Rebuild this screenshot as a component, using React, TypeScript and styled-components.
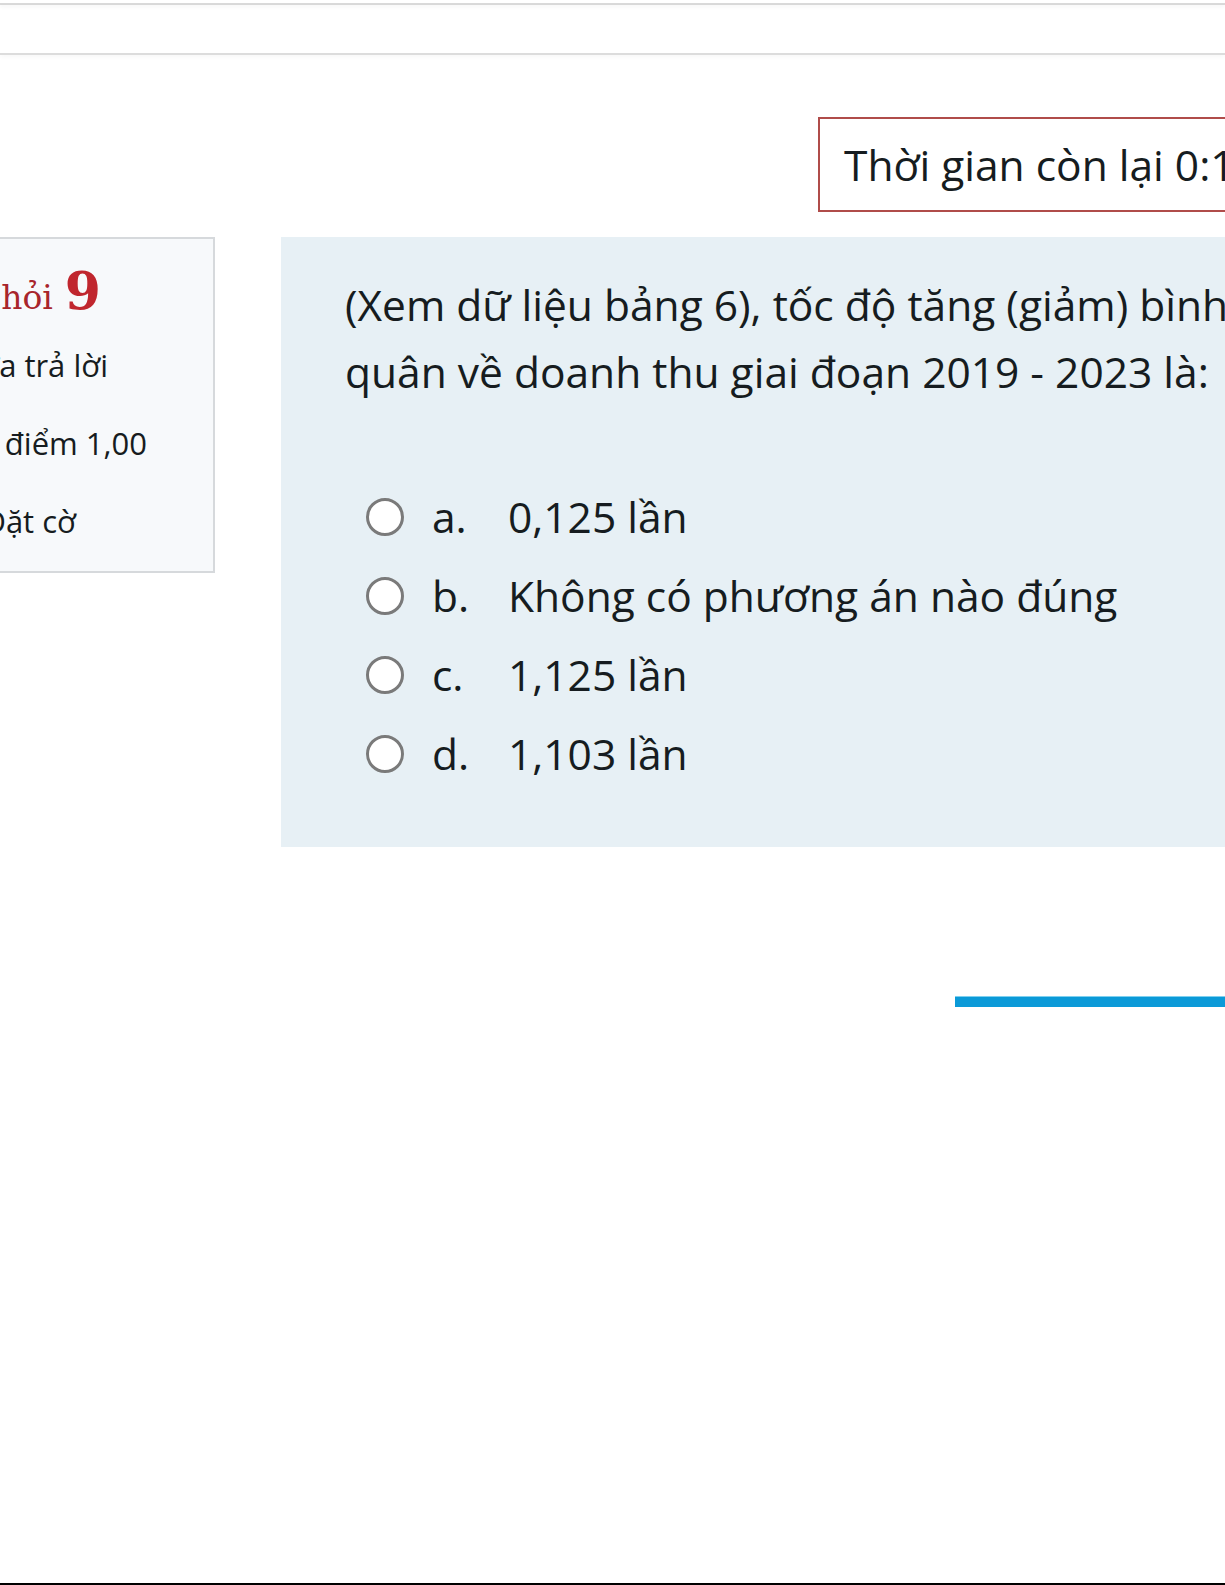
import styled, { createGlobalStyle } from 'styled-components';

const GlobalStyle = createGlobalStyle`
  html, body {
    margin: 0;
    padding: 0;
    background: #ffffff;
    overflow: hidden;
  }
  body {
    font-family: 'Open Sans', 'Noto Sans', sans-serif;
    color: #1b2226;
  }
`;

const options = [
  { letter: 'a.', text: '0,125 lần' },
  { letter: 'b.', text: 'Không có phương án nào đúng' },
  { letter: 'c.', text: '1,125 lần' },
  { letter: 'd.', text: '1,103 lần' },
];

const infoRows = [
  { text: 'Chưa trả lời', end: 108 },
  { text: 'Đạt điểm 1,00', end: 147 },
  { text: 'Đặt cờ', end: 76 },
];

function App() {
  return (
    <Page>
      <GlobalStyle />
      <TopNav />
      <SubNav />

      <TimerRow>
        <TimerBox>Thời gian còn lại 0:17:36</TimerBox>
      </TimerRow>

      <QuestionRow>
        <InfoPanel>
          <InfoTitle>
            <TitleWord>Câu hỏi</TitleWord>
            <QuestionNumber>9</QuestionNumber>
          </InfoTitle>
          {infoRows.map((row) => (
            <InfoRow key={row.text} $end={row.end}>
              {row.text}
            </InfoRow>
          ))}
        </InfoPanel>

        <Formulation>
          <QuestionText>
            <span>(Xem dữ liệu bảng 6), tốc độ tăng (giảm) bình</span>
            <br />
            <span>quân về doanh thu giai đoạn 2019 - 2023 là:</span>
          </QuestionText>
          <AnswerList>
            {options.map((opt) => (
              <AnswerRow key={opt.letter}>
                <Radio />
                <AnswerLetter>{opt.letter}</AnswerLetter>
                <AnswerText>{opt.text}</AnswerText>
              </AnswerRow>
            ))}
          </AnswerList>
        </Formulation>
      </QuestionRow>

      <ButtonRow>
        <NextButton />
      </ButtonRow>

      <BottomRule />
    </Page>
  );
}

export default App;

// styles
const Page = styled.div`
  display: flex;
  flex-direction: column;
  min-height: 1585px;
  width: 1225px;
`;

const TopNav = styled.div`
  height: 3px;
  border-bottom: 2px solid #d9d9d9;
  box-shadow: 0 2px 4px rgba(0, 0, 0, 0.04);
`;

const SubNav = styled.div`
  height: 48px;
  border-bottom: 2px solid #dcdcdc;
  box-shadow: 0 2px 5px rgba(0, 0, 0, 0.035);
`;

const TimerRow = styled.div`
  display: flex;
  justify-content: flex-end;
  margin-top: 62px;
  margin-right: -60px;
`;

const TimerBox = styled.div`
  box-sizing: border-box;
  width: 467px;
  height: 95px;
  border: 2px solid #b04c4a;
  padding-left: 24px;
  display: flex;
  align-items: center;
  font-size: 42.5px;
  white-space: nowrap;
  overflow: hidden;
  color: #161c20;
`;

const QuestionRow = styled.div`
  display: flex;
  align-items: flex-start;
  gap: 66px;
  margin-top: 25px;
  margin-right: -60px;
`;

const InfoPanel = styled.div`
  box-sizing: border-box;
  flex: 0 0 215px;
  height: 336px;
  background: #f7f9fb;
  border: 2px solid #d6d9dc;
  border-left: none;
  padding-top: 29px;
  white-space: nowrap;
`;

const InfoTitle = styled.div`
  display: flex;
  justify-content: flex-end;
  align-items: baseline;
  gap: 12px;
  width: 101px;
  height: 46px;
  line-height: 46px;
  margin-bottom: 12px;
  color: #b1232b;
`;

const TitleWord = styled.span`
  font-family: 'DejaVu Serif', 'Liberation Serif', serif;
  font-size: 33px;
  color: #a8252b;
`;

const QuestionNumber = styled.span`
  font-family: 'DejaVu Serif', 'Liberation Serif', serif;
  font-weight: 700;
  font-size: 52px;
  color: #c0262e;
`;

const InfoRow = styled.div<{ $end: number }>`
  display: flex;
  justify-content: flex-end;
  width: ${(p) => p.$end}px;
  height: 78px;
  line-height: 78px;
  font-size: 31px;
  color: #161c20;
`;

const Formulation = styled.div`
  box-sizing: border-box;
  flex: 1;
  height: 610px;
  background: #e7f0f5;
  padding: 34px 0 0 64px;
  white-space: nowrap;
`;

const QuestionText = styled.div`
  font-size: 42.5px;
  line-height: 67px;
  color: #161c20;
`;

const AnswerList = styled.div`
  display: flex;
  flex-direction: column;
  margin-top: 72px;
`;

const AnswerRow = styled.div`
  display: flex;
  align-items: center;
  height: 79px;
  font-size: 42.5px;
  color: #161c20;
`;

const Radio = styled.span`
  box-sizing: border-box;
  width: 38px;
  height: 38px;
  margin-left: 21px;
  margin-right: 28px;
  border-radius: 50%;
  border: 3px solid #7a7a7a;
  background: #ffffff;
  flex-shrink: 0;
`;

const AnswerLetter = styled.span`
  width: 76px;
  flex-shrink: 0;
`;

const AnswerText = styled.span``;

const ButtonRow = styled.div`
  display: flex;
  justify-content: flex-end;
  margin-top: 149px;
  margin-right: -40px;
`;

const NextButton = styled.div`
  width: 310px;
  height: 10px;
  background: #0b9ad8;
  border-top: 1px solid #7fd0ef;
`;

const BottomRule = styled.div`
  margin-top: auto;
  height: 2px;
  background: #000000;
`;
